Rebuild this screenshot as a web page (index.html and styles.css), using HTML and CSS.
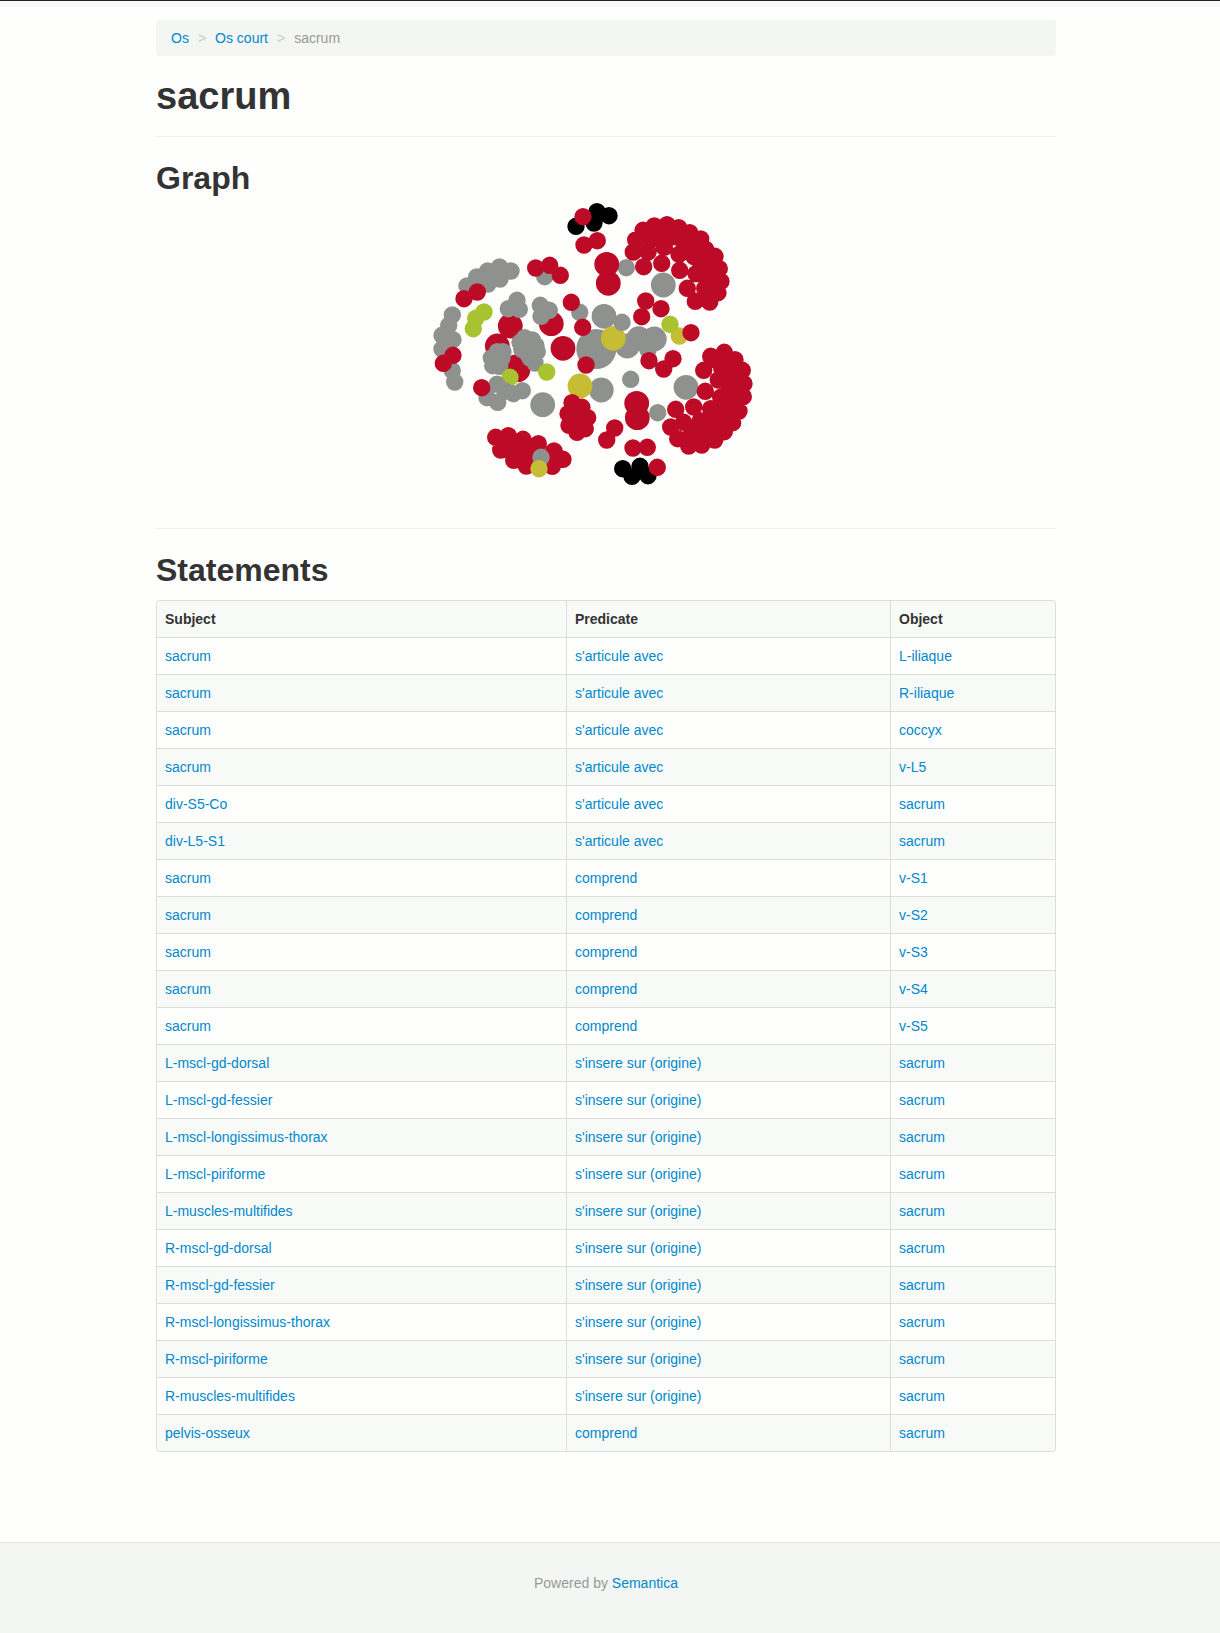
FILE: index.html
```html
<!DOCTYPE html>
<html lang="fr">
<head>
<meta charset="utf-8">
<title>sacrum</title>
<link rel="stylesheet" href="styles.css">
</head>
<body>
<div class="topbar"></div>
<main class="container">
<nav aria-label="Breadcrumb">
<ol class="breadcrumb">
<li><a href="#">Os</a></li>
<li><a href="#">Os court</a></li>
<li class="active">sacrum</li>
</ol>
</nav>
<h1>sacrum</h1>
<hr>
<section>
<h2>Graph</h2>
<svg class="graph" viewBox="156 198 900 310" role="img" aria-label="Graph">
<g class="small">
<path class="gray" d="M499.5 267h0M511 271h0M487.7 271h0M500 279h0M488 284h0M494 276h0M476.7 277h0M467 286h0M544.7 276.7h0M452.3 315h0M448.7 325.3h0M442 335.3h0M453 339.7h0M442 349h0M448 347h0M452.3 370.7h0M454.7 382h0M579.7 312.3h0M626.3 267.7h0M648 350h0M630.7 379.3h0M657.7 412.7h0"/>
</g>
<g class="large">
<path class="red" d="M510.3 326h0M551.3 323.7h0M563 348.3h0M497.3 346h0M606.7 264.3h0M608.3 283.3h0M636.7 403.3h0M637.3 417.7h0M518 369.7h0"/>
<path class="gray" d="M604 316.3h0M627.3 346h0M638.7 338.7h0M654.3 339h0M663.3 285h0M686 387.3h0M601.3 390h0M542.7 404.7h0"/>
</g>
<g class="main"><path class="gray" d="M596.3 349h0"/></g>
<g class="large"><path class="yellow" d="M613.3 338.3h0M580 386h0"/></g>
<g class="small">
<path class="red" d="M515 363.3h0"/>
<path class="gray" d="M517 300.3h0M508.3 308.7h0M519.3 309.3h0M540.3 305.3h0M549.3 310.3h0M541 316.3h0M622 322.3h0M497.3 351.7h0M503 351.7h0M491.3 358h0M492.7 365.7h0M499.7 366.3h0M502 358h0M497 358h0M524.7 337.7h0M532.3 340h0M520 342.3h0M521.7 349.3h0M536 345.7h0M537.3 351.7h0M527.3 353.3h0M535 363h0M530 346h0M530 358h0"/>
<path class="green" d="M484 312h0M475.7 318.3h0M473.3 328.7h0M510 377.3h0M546.7 372h0"/>
<path class="gray" d="M497 384.3h0M513.3 393.7h0M522.3 390.7h0M487 397.7h0M497.7 402.3h0M505 391h0"/>
<path class="yellow" d="M679.3 336h0"/>
<path class="green" d="M670 324.3h0"/>
<path class="black" d="M597 211.7h0M609 215.7h0M594 223h0M576 226.3h0M622.7 468.7h0M640 466.3h0M632 476.3h0M648 475.7h0"/>
<path class="red" d="M477.3 292h0M464 298.7h0M535.7 268h0M549.7 265.3h0M560.3 275.3h0M453 355.3h0M443.3 363.3h0M571.3 302.3h0M582.7 327.3h0M481.7 387.7h0M586 365h0M583 216.7h0M584 245h0M597.3 240.7h0M645.7 301h0M661 308.7h0M641.7 316.7h0M691 332.7h0M649 360.7h0M663.7 369h0M673 358.7h0M614.7 428h0M606.7 440h0M633 448h0M647.3 447.3h0M657.3 467.3h0"/>
<path class="red" d="M572 402.7h0M582 407.3h0M568 413.7h0M587.7 417.7h0M569 425.3h0M585.3 428.7h0M577 432.3h0M578 418h0"/>
<path class="red" d="M495.7 437.3h0M508.3 435.7h0M523 439.3h0M538.3 443.7h0M554 451h0M563 459.3h0M552.3 466.3h0M526.3 466h0M513.7 460.3h0M500.7 450h0M506 445h0M516.7 448.3h0M520 455h0M528 454h0M531 449h0M535 458h0M543 458h0M548 460h0"/>
<path class="red" d="M643.7 266.7h0M661.7 263.3h0M679.7 270.3h0M633.3 252h0M635.7 240h0M643 230.3h0M654.3 226h0M667 224.7h0M678.7 227.7h0M689.7 232.7h0M700.7 239h0M705.7 249.3h0M715 256.3h0M719.3 268.7h0M721 281.3h0M718 292.7h0M709.7 302h0M695.3 301.3h0M687.3 288.3h0M696 273.7h0M648 252h0M664.3 247.3h0M679 254.3h0M656.7 238.3h0M673.3 236.7h0M650 240h0M691.7 245h0M694 256.7h0M706.7 263.3h0M704.7 288.3h0M708 275h0M665 237h0M683 241h0M701 265h0M712 270h0M711 284h0"/>
<path class="red" d="M710.7 356.3h0M724.3 352.3h0M735 359.7h0M742.3 370.3h0M744 383.7h0M743.3 396.7h0M739 411h0M703.7 370.3h0M705.3 391.3h0M718.3 380h0M721.7 368.3h0M730 376.7h0M720.7 397.3h0M731.7 390h0M730 403.3h0M693.7 407h0M675.7 409.3h0M710.7 408.7h0M721.7 410h0M670.7 427h0M677.7 438.7h0M688.7 446h0M701.7 445h0M714.7 440h0M724.3 431.7h0M732.7 422.7h0M683.7 422.3h0M700.3 420.7h0M690 436.7h0M703.3 431.7h0M715 426.7h0M723.3 416.7h0M716 360h0M728 366h0M727 383h0M735 400h0M711 418h0M695 430h0"/>
<path class="gray" d="M541 457.3h0"/>
<path class="yellow" d="M539 468.7h0"/>
</g>
</svg>
</section>
<hr>
<section>
<h2>Statements</h2>
<table class="statements">
<thead>
<tr><th scope="col" class="subject">Subject</th><th scope="col" class="predicate">Predicate</th><th scope="col">Object</th></tr>
</thead>
<tbody>
<tr><td><a href="#">sacrum</a></td><td><a href="#">s'articule avec</a></td><td><a href="#">L-iliaque</a></td></tr>
<tr><td><a href="#">sacrum</a></td><td><a href="#">s'articule avec</a></td><td><a href="#">R-iliaque</a></td></tr>
<tr><td><a href="#">sacrum</a></td><td><a href="#">s'articule avec</a></td><td><a href="#">coccyx</a></td></tr>
<tr><td><a href="#">sacrum</a></td><td><a href="#">s'articule avec</a></td><td><a href="#">v-L5</a></td></tr>
<tr><td><a href="#">div-S5-Co</a></td><td><a href="#">s'articule avec</a></td><td><a href="#">sacrum</a></td></tr>
<tr><td><a href="#">div-L5-S1</a></td><td><a href="#">s'articule avec</a></td><td><a href="#">sacrum</a></td></tr>
<tr><td><a href="#">sacrum</a></td><td><a href="#">comprend</a></td><td><a href="#">v-S1</a></td></tr>
<tr><td><a href="#">sacrum</a></td><td><a href="#">comprend</a></td><td><a href="#">v-S2</a></td></tr>
<tr><td><a href="#">sacrum</a></td><td><a href="#">comprend</a></td><td><a href="#">v-S3</a></td></tr>
<tr><td><a href="#">sacrum</a></td><td><a href="#">comprend</a></td><td><a href="#">v-S4</a></td></tr>
<tr><td><a href="#">sacrum</a></td><td><a href="#">comprend</a></td><td><a href="#">v-S5</a></td></tr>
<tr><td><a href="#">L-mscl-gd-dorsal</a></td><td><a href="#">s'insere sur (origine)</a></td><td><a href="#">sacrum</a></td></tr>
<tr><td><a href="#">L-mscl-gd-fessier</a></td><td><a href="#">s'insere sur (origine)</a></td><td><a href="#">sacrum</a></td></tr>
<tr><td><a href="#">L-mscl-longissimus-thorax</a></td><td><a href="#">s'insere sur (origine)</a></td><td><a href="#">sacrum</a></td></tr>
<tr><td><a href="#">L-mscl-piriforme</a></td><td><a href="#">s'insere sur (origine)</a></td><td><a href="#">sacrum</a></td></tr>
<tr><td><a href="#">L-muscles-multifides</a></td><td><a href="#">s'insere sur (origine)</a></td><td><a href="#">sacrum</a></td></tr>
<tr><td><a href="#">R-mscl-gd-dorsal</a></td><td><a href="#">s'insere sur (origine)</a></td><td><a href="#">sacrum</a></td></tr>
<tr><td><a href="#">R-mscl-gd-fessier</a></td><td><a href="#">s'insere sur (origine)</a></td><td><a href="#">sacrum</a></td></tr>
<tr><td><a href="#">R-mscl-longissimus-thorax</a></td><td><a href="#">s'insere sur (origine)</a></td><td><a href="#">sacrum</a></td></tr>
<tr><td><a href="#">R-mscl-piriforme</a></td><td><a href="#">s'insere sur (origine)</a></td><td><a href="#">sacrum</a></td></tr>
<tr><td><a href="#">R-muscles-multifides</a></td><td><a href="#">s'insere sur (origine)</a></td><td><a href="#">sacrum</a></td></tr>
<tr><td><a href="#">pelvis-osseux</a></td><td><a href="#">comprend</a></td><td><a href="#">sacrum</a></td></tr>
</tbody>
</table>
</section>
</main>
<footer class="footer">
<p>Powered by <a href="#">Semantica</a></p>
</footer>
</body>
</html>
```
FILE: styles.css
```css
* {
  box-sizing: border-box;
}

body {
  margin: 0;
  min-height: 100vh;
  display: flex;
  flex-direction: column;
  background: #fefffd;
  color: #333;
  font: 14px/20px "Liberation Sans", Arial, sans-serif;
}

a {
  color: #08c;
  text-decoration: none;
}

a:hover {
  text-decoration: underline;
}

.topbar {
  height: 7px;
  border-top: 1px solid #222;
  background: #f9f9f9;
}

.container {
  width: 100%;
  max-width: 948px;
  margin: 0 auto;
  padding: 13px 28px 90px 20px;
}

.breadcrumb {
  display: flex;
  margin: 0 0 20px;
  padding: 8px 15px;
  list-style: none;
  background: #f4f6f3;
  border-radius: 4px;
}

.breadcrumb li + li::before {
  content: ">";
  padding: 0 9px;
  color: #ccc;
}

.breadcrumb .active {
  color: #999;
}

h1,
h2 {
  margin: 0;
  line-height: 40px;
}

h1 {
  font-size: 38px;
}

h2 {
  font-size: 32px;
}

hr {
  margin: 20px 0;
  border: 0;
  border-top: 1px solid #eee;
  border-bottom: 1px solid #fff;
}

.graph {
  display: block;
  width: 100%;
  height: auto;
  fill: none;
  stroke-linecap: round;
}

.small {
  stroke-width: 17.4px;
}

.large {
  stroke-width: 24.8px;
}

.main {
  stroke-width: 40px;
}

.red {
  stroke: #bd0a26;
}

.gray {
  stroke: #8e918e;
}

.green {
  stroke: #a8c32f;
}

.yellow {
  stroke: #c6bd35;
}

.black {
  stroke: #000;
}

.statements {
  width: 100%;
  margin-top: 10px;
  table-layout: fixed;
  border: 1px solid #ddd;
  border-left: 0;
  border-radius: 4px;
  border-spacing: 0;
  overflow: hidden;
}

.subject {
  width: 410px;
}

.predicate {
  width: 324px;
}

.statements th,
.statements td {
  padding: 8px;
  text-align: left;
  border-left: 1px solid #ddd;
}

.statements td {
  border-top: 1px solid #ddd;
}

.statements th,
.statements tr:nth-child(even) td {
  background: #f8faf8;
}

.statements th:first-child {
  border-top-left-radius: 4px;
}

.statements tr:last-child td:first-child {
  border-bottom-left-radius: 4px;
}

.footer {
  flex: 1;
  padding: 30px 8px 30px 0;
  text-align: center;
  color: #999;
  background: #f4f6f3;
  border-top: 1px solid #e2e4e2;
}

.footer p {
  margin: 0;
}
```
